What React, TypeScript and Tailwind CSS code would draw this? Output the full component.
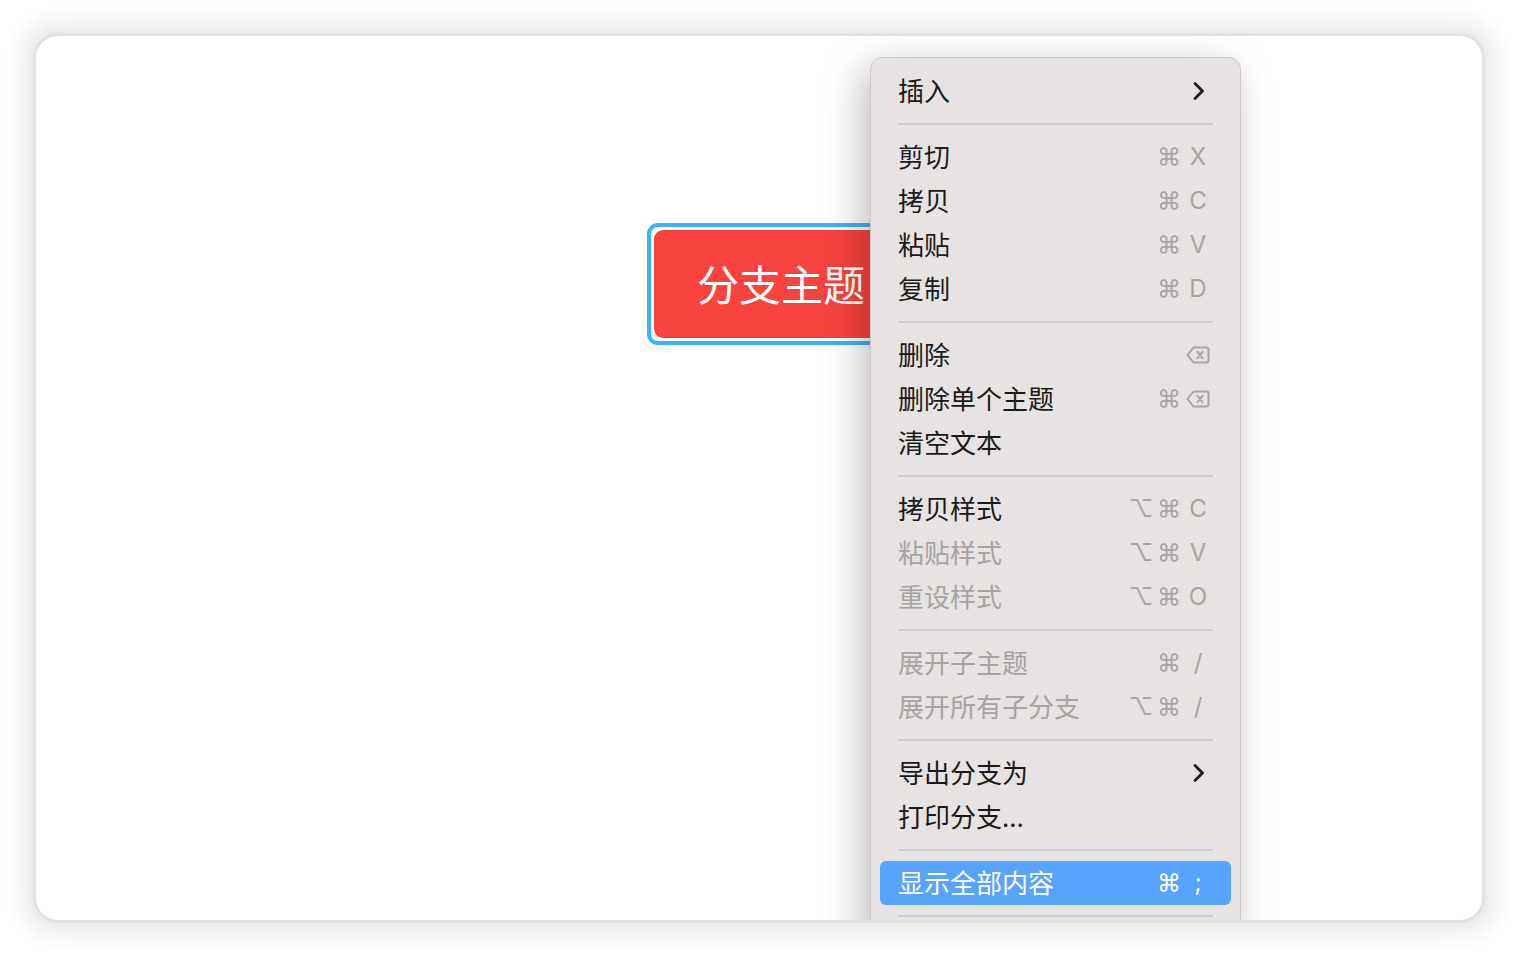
import React from "react";

type Item =
  | { sep: true }
  | {
      label: string;
      opt?: boolean;
      cmd?: boolean;
      keyName?: string;
      del?: boolean;
      sub?: boolean;
      disabled?: boolean;
      active?: boolean;
    };

const items: Item[] = [
  { label: "插入", sub: true },
  { sep: true },
  { label: "剪切", cmd: true, keyName: "X" },
  { label: "拷贝", cmd: true, keyName: "C" },
  { label: "粘贴", cmd: true, keyName: "V" },
  { label: "复制", cmd: true, keyName: "D" },
  { sep: true },
  { label: "删除", del: true },
  { label: "删除单个主题", cmd: true, del: true },
  { label: "清空文本" },
  { sep: true },
  { label: "拷贝样式", opt: true, cmd: true, keyName: "C" },
  { label: "粘贴样式", opt: true, cmd: true, keyName: "V", disabled: true },
  { label: "重设样式", opt: true, cmd: true, keyName: "O", disabled: true },
  { sep: true },
  { label: "展开子主题", cmd: true, keyName: "/", disabled: true },
  { label: "展开所有子分支", opt: true, cmd: true, keyName: "/", disabled: true },
  { sep: true },
  { label: "导出分支为", sub: true },
  { label: "打印分支..." },
  { sep: true },
  { label: "显示全部内容", cmd: true, keyName: ";", active: true },
  { sep: true },
];

const DeleteIcon = () => (
  <svg width="24" height="18" viewBox="0 0 24 18" fill="none" stroke="currentColor" strokeWidth="2" strokeLinejoin="round" strokeLinecap="round">
    <path d="M7.5 1.5H20.5a2 2 0 0 1 2 2v11a2 2 0 0 1-2 2H7.5L1.5 9Z" />
    <path d="M11.5 5.8l5 6.4M16.5 5.8l-5 6.4" />
  </svg>
);

const Chevron = () => (
  <svg width="14" height="20" viewBox="0 0 14 20" fill="none" stroke="#1c1c1c" strokeWidth="2.8" strokeLinecap="round" strokeLinejoin="round">
    <path d="M4 2.5l7.5 7.5L4 17.5" />
  </svg>
);

const MenuRow = ({ item }: { item: Exclude<Item, { sep: true }> }) => {
  const labelColor = item.active ? "text-white" : item.disabled ? "text-[#a5a3a2]" : "text-[#1a1a1a]";
  const keyColor = item.active ? "text-white" : "text-[#a7a5a4]";
  return (
    <div className={`mx-[9px] flex h-[44px] items-center rounded-[6px] px-[18px] ${item.active ? "bg-[#58a3fd]" : ""}`}>
      <span className={`mb-[3px] flex-1 font-['Noto_Sans_CJK_SC',sans-serif] text-[26px] leading-none ${labelColor}`}>
        {item.label}
      </span>
      <div className={`flex items-center font-['Inter','DejaVu_Sans',sans-serif] text-[24px] leading-none ${keyColor}`}>
        <span className="w-[28px] text-center">{item.opt ? "⌥" : ""}</span>
        <span className="w-[28px] text-center">{item.cmd ? "⌘" : ""}</span>
        <span className="flex w-[30px] justify-center">
          {item.sub ? <Chevron /> : item.del ? <DeleteIcon /> : item.keyName}
        </span>
      </div>
    </div>
  );
};

export default function App() {
  return (
    <div className="h-[956px] w-[1518px] bg-white p-[36px]">
      <div className="relative h-full w-full overflow-hidden rounded-[22px] bg-white shadow-[0_0_0_3px_#e2e2e2,0_0_4px_8px_#ececec,0_0_14px_22px_#f4f4f4]">
        {/* topic node */}
        <div className="absolute left-[611px] top-[187px] rounded-[11px] border-[4px] border-[#39b5f8] bg-white p-[3px]">
          <div className="flex h-[108px] items-center rounded-[9px] bg-[#f8433e] px-[43px] pb-[4px] font-['Noto_Sans_CJK_SC',sans-serif] text-[42px] text-white">
            分支主题
          </div>
        </div>

        {/* context menu */}
        <div className="absolute left-[834px] top-[21px] w-[371px] rounded-[12px] border border-[#cbc8c7] bg-[#e7e3e2] pt-[11px] pb-[20px] shadow-[-8px_10px_40px_rgba(0,0,0,0.26)]">
          {items.map((item, i) =>
            "sep" in item ? (
              <div key={i} className="mx-[27px] flex h-[22px] items-center">
                <div className="h-[2px] w-full bg-[#d1cdcc]" />
              </div>
            ) : (
              <MenuRow key={i} item={item} />
            )
          )}
        </div>
      </div>
    </div>
  );
}
